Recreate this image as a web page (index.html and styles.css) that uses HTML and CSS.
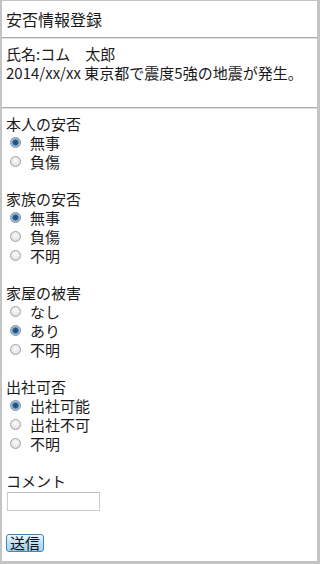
FILE: index.html
```html
<!DOCTYPE html>
<html>
<head>
    <meta charset="utf-8">
    <title>安否情報登録</title>
    <link rel="stylesheet" href="styles.css">
</head>
<body>
    <div class="page">
        <div class="header">安否情報登録</div>
        <hr class="rule">

        <div class="info">
            <div>氏名:コム　太郎</div>
            <div>2014/xx/xx 東京都で震度5強の地震が発生。</div>
        </div>
        <hr class="rule">

        <form class="form">
            <div class="group">
                <div class="label">本人の安否</div>
                <label class="option"><input type="radio" name="self" checked>無事</label>
                <label class="option"><input type="radio" name="self">負傷</label>
            </div>

            <div class="group">
                <div class="label">家族の安否</div>
                <label class="option"><input type="radio" name="family" checked>無事</label>
                <label class="option"><input type="radio" name="family">負傷</label>
                <label class="option"><input type="radio" name="family">不明</label>
            </div>

            <div class="group">
                <div class="label">家屋の被害</div>
                <label class="option"><input type="radio" name="house">なし</label>
                <label class="option"><input type="radio" name="house" checked>あり</label>
                <label class="option"><input type="radio" name="house">不明</label>
            </div>

            <div class="group">
                <div class="label">出社可否</div>
                <label class="option"><input type="radio" name="work" checked>出社可能</label>
                <label class="option"><input type="radio" name="work">出社不可</label>
                <label class="option"><input type="radio" name="work">不明</label>
            </div>

            <div class="group">
                <div class="label">コメント</div>
                <input type="text" class="comment">
            </div>

            <button type="button" class="submit">送信</button>
        </form>
    </div>
</body>
</html>
```

FILE: styles.css
```css
html, body {
    margin: 0;
    padding: 0;
    background: #fff;
}

body {
    font-family: "Noto Sans CJK JP", "Noto Sans", sans-serif;
    font-size: 15px;
    color: #1a1a1a;
}

.page {
    box-sizing: border-box;
    width: 320px;
    height: 564px;
    border-style: solid;
    border-color: #c4c4c4;
    border-width: 1px 3px 3px 2px;
    overflow: hidden;
}

.header {
    font-size: 16px;
    line-height: 19px;
    padding: 9px 4px 8px;
}

.rule {
    margin: 0;
    height: 0;
    border: 0;
    border-top: 1px solid #a9a9a9;
    border-bottom: 1px solid #e2e2e2;
}

.info {
    line-height: 19px;
    padding: 5px 4px 25px;
}

.form {
    margin: 0;
    padding: 5px 4px 0;
}

.group {
    margin-bottom: 18px;
}

.label,
.option {
    line-height: 19px;
}

.option {
    display: flex;
    align-items: center;
    height: 19px;
}

.option input {
    appearance: none;
    -webkit-appearance: none;
    box-sizing: border-box;
    width: 11px;
    height: 11px;
    margin: 0 9px 0 4px;
    border: 1px solid #a3a3a3;
    border-radius: 50%;
    background: radial-gradient(circle at 50% 40%, #fdfdfd 0, #e6e6e6 60%, #cfcfcf 100%);
}

.option input:checked {
    border-color: #7d8f9f;
    background: radial-gradient(circle at 50% 50%, #1d4a73 0, #2c5f8c 2.5px, #8fb4d3 3.5px, #e4eef6 100%);
}

.comment {
    box-sizing: border-box;
    display: block;
    width: 93px;
    height: 19px;
    margin: 2px 0 0 1px;
    border: 1px solid #cdcdcd;
    border-top-color: #bdbdbd;
    padding: 0 2px;
    font: inherit;
}

.group:last-of-type {
    margin-bottom: 21px;
}

.submit {
    box-sizing: border-box;
    height: 18px;
    margin: 0;
    padding: 0 3px;
    font-family: inherit;
    font-size: 15px;
    line-height: 15px;
    color: #111;
    border: 1px solid #3f87bb;
    border-radius: 3px;
    background: linear-gradient(#eef7fc, #bfe0f4 50%, #a6d2ee);
}
```
